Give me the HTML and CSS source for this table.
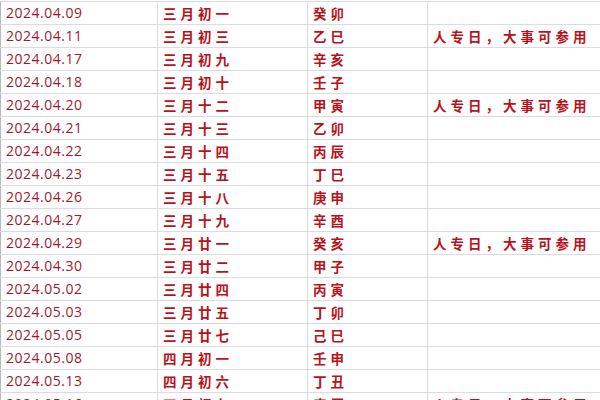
FILE: index.html
```html
<!DOCTYPE html>
<html lang="zh">
<head>
<meta charset="utf-8">
<link rel="stylesheet" href="styles.css">
</head>
<body>
<table class="sheet">
<colgroup>
<col class="c-date"><col class="c-lunar"><col class="c-gz"><col class="c-note">
</colgroup>
<tbody>
<tr><td class="date">2024.04.09</td><td class="cn">三月初一</td><td class="cn">癸卯</td><td class="cn"></td></tr>
<tr><td class="date">2024.04.11</td><td class="cn">三月初三</td><td class="cn">乙巳</td><td class="cn">人专日，大事可参用</td></tr>
<tr><td class="date">2024.04.17</td><td class="cn">三月初九</td><td class="cn">辛亥</td><td class="cn"></td></tr>
<tr><td class="date">2024.04.18</td><td class="cn">三月初十</td><td class="cn">壬子</td><td class="cn"></td></tr>
<tr><td class="date">2024.04.20</td><td class="cn">三月十二</td><td class="cn">甲寅</td><td class="cn">人专日，大事可参用</td></tr>
<tr><td class="date">2024.04.21</td><td class="cn">三月十三</td><td class="cn">乙卯</td><td class="cn"></td></tr>
<tr><td class="date">2024.04.22</td><td class="cn">三月十四</td><td class="cn">丙辰</td><td class="cn"></td></tr>
<tr><td class="date">2024.04.23</td><td class="cn">三月十五</td><td class="cn">丁巳</td><td class="cn"></td></tr>
<tr><td class="date">2024.04.26</td><td class="cn">三月十八</td><td class="cn">庚申</td><td class="cn"></td></tr>
<tr><td class="date">2024.04.27</td><td class="cn">三月十九</td><td class="cn">辛酉</td><td class="cn"></td></tr>
<tr><td class="date">2024.04.29</td><td class="cn">三月廿一</td><td class="cn">癸亥</td><td class="cn">人专日，大事可参用</td></tr>
<tr><td class="date">2024.04.30</td><td class="cn">三月廿二</td><td class="cn">甲子</td><td class="cn"></td></tr>
<tr><td class="date">2024.05.02</td><td class="cn">三月廿四</td><td class="cn">丙寅</td><td class="cn"></td></tr>
<tr><td class="date">2024.05.03</td><td class="cn">三月廿五</td><td class="cn">丁卯</td><td class="cn"></td></tr>
<tr><td class="date">2024.05.05</td><td class="cn">三月廿七</td><td class="cn">己巳</td><td class="cn"></td></tr>
<tr><td class="date">2024.05.08</td><td class="cn">四月初一</td><td class="cn">壬申</td><td class="cn"></td></tr>
<tr><td class="date">2024.05.13</td><td class="cn">四月初六</td><td class="cn">丁丑</td><td class="cn"></td></tr>
<tr><td class="date">2024.05.16</td><td class="cn">四月初九</td><td class="cn">庚辰</td><td class="cn">人专日，大事可参用</td></tr>
</tbody>
</table>
</body>
</html>
```
FILE: styles.css
```css
html, body {
  margin: 0;
  padding: 0;
  background: #ffffff;
  overflow: hidden;
  width: 600px;
  height: 400px;
}
.sheet {
  border-collapse: collapse;
  table-layout: fixed;
  width: 640px;
  margin-top: 1px;
}
.c-date { width: 157px; }
.c-lunar { width: 150px; }
.c-gz { width: 120px; }
.c-note { width: 213px; }
.sheet td {
  height: 19px;
  padding: 0 0 3px 5px;
  border: 1px solid #dcdcdc;
  vertical-align: bottom;
  white-space: nowrap;
  overflow: hidden;
  line-height: 16px;
}
.sheet td:first-child {
  border-left-color: #b8b8b8;
}
.date {
  font-family: "Open Sans", "Liberation Sans", sans-serif;
  font-size: 14px;
  letter-spacing: 0.5px;
  color: #9c1a2e;
  padding-left: 4px;
}
.cn {
  font-family: "Noto Sans CJK SC", sans-serif;
  font-weight: 700;
  font-size: 13.5px;
  letter-spacing: 4px;
  color: #b8121c;
}
```
